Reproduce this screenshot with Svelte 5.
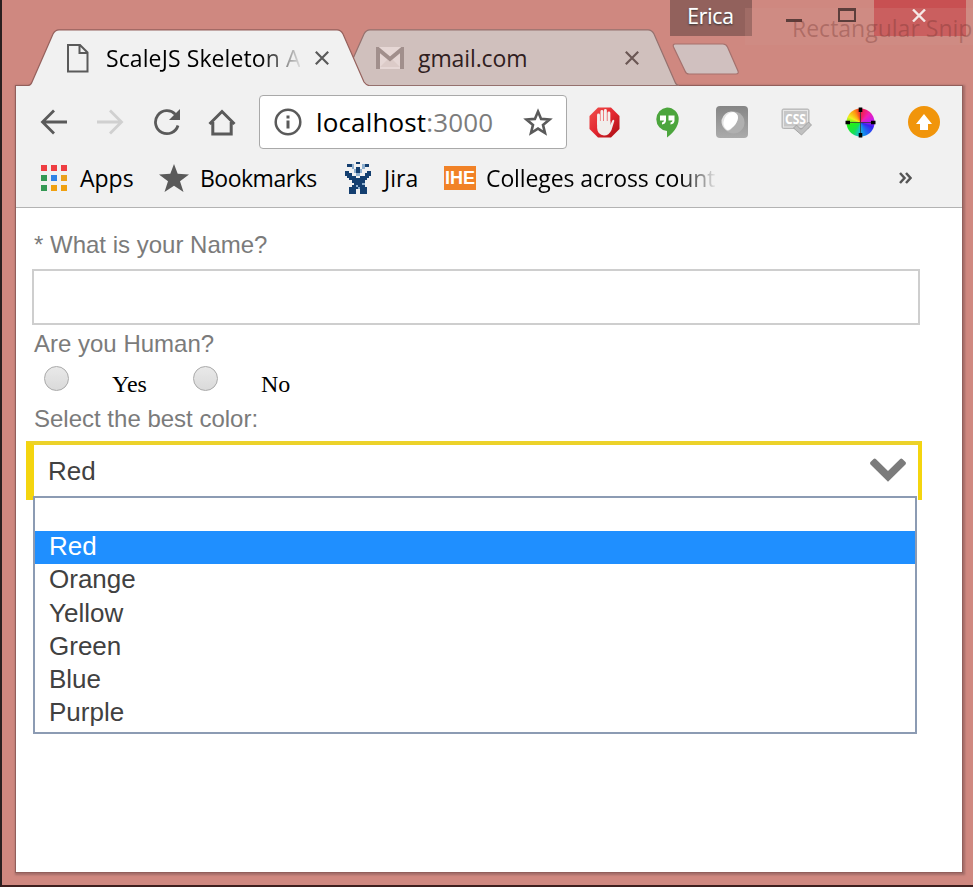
<script>
  const options = ['', 'Red', 'Orange', 'Yellow', 'Green', 'Blue', 'Purple'];
  let selected = $state('Red');
  const appColors = ['#ee3e42', '#ee3e42', '#ee3e42', '#349854', '#2f82e6', '#eaa01c', '#349854', '#f0a010', '#f0a010'];
  // Pixel map of the Jira mark: # is dark blue, o is light blue.
  const jira = [
    '.....##.....',
    '.##o....o##.',
    '...o.##.o...',
    '....o##o....',
    '##..o##o..##',
    '###..oo..###',
    '.####..####.',
    '..########..',
    '...######...',
    '....####o...',
    '...##o###...',
    '..####o###..',
    '..###..###..',
    '..###..###..'
  ];
  const cells = jira.flatMap((row, y) => [...row].map((c, x) => ({ c, x, y }))).filter((d) => d.c !== '.');
</script>

<div class="desktop">
  <header class="strip">
    <div class="tab active">
      <svg class="shape" width="342" height="58" viewBox="0 0 342 58"><path d="M0 57Q3 56 4 53L25 5Q27 1 31 1H309Q313 1 315 5L336 53Q338 56 341 57V58H0Z" fill="#f1f1f1" /><path d="M0 56.5Q3 56 4 53L25 5Q27 .8 31 .8H309Q313 .8 315 5L336 53Q338 56 341 56.5" fill="none" stroke="#95605c" stroke-width="1.2" /></svg>
      <svg class="doc" width="22" height="29" viewBox="0 0 22 29"><path d="M1 1H13L20.500 8.500V27.500H1Z M12.500 1V9H20.500" fill="none" stroke="#5a5a5a" stroke-width="2" /></svg>
      <span class="title fade">ScaleJS Skeleton A</span>
      <svg class="x" width="14" height="14" viewBox="0 0 14 14"><path d="M.8 .8L13.200 13.200M13.200 .8L.8 13.200" stroke="#5a5a5a" stroke-width="2.200" /></svg>
    </div>
    <div class="tab idle">
      <svg class="shape" width="338" height="58" viewBox="0 0 338 58"><path d="M0 57L23 5Q25 1 29 1H307Q311 1 313 5L334 53Q335 56 338 57Z" fill="#d0c0bd" /><path d="M0 56.500L23 5Q25 .8 29 .8H307Q311 .8 313 5L334 53Q335 56 338 56.500H0" fill="none" stroke="#95716e" stroke-width="1.200" /></svg>
      <svg class="mail" width="28" height="22" viewBox="0 0 28 22"><rect width="28" height="22" rx="2" fill="#e6d7d5" /><path d="M4 20L14 10L24 20" fill="#dccbc8" /><path d="M2 22V2L14 12L26 2V22" fill="none" stroke="#a18f8c" stroke-width="4" /></svg>
      <span class="title">gmail.com</span>
      <svg class="x" width="14" height="14" viewBox="0 0 14 14"><path d="M.8 .8L13.200 13.200M13.200 .8L.8 13.200" stroke="#6b5754" stroke-width="2.200" /></svg>
    </div>
    <svg class="newtab" width="68" height="33" viewBox="0 0 68 33"><path d="M3 1H51Q54 1 55.500 4L66 28Q67 31 64 31H17Q14 31 13 28L1.500 4Q.5 1 3 1Z" fill="#d0c0bf" stroke="#a5716d" stroke-width="1.200" /></svg>
  </header>

  <div class="caption">
    <span class="user">Erica</span>
    <svg class="min" width="16" height="3"><rect width="16" height="3" fill="#3c2624" /></svg>
    <svg class="max" width="18" height="14"><rect x="1" y="1.500" width="16" height="11.500" fill="none" stroke="#3c2624" stroke-width="2" /><path d="M0 1.500H18" stroke="#3c2624" stroke-width="3" /></svg>
    <span class="close"><svg width="14" height="13" viewBox="0 0 14 13"><path d="M1 .5L13 12.500M13 .5L1 12.500" stroke="#fff" stroke-width="2.400" /></svg></span>
  </div>
  <div class="ghost">Rectangular Snip</div>

  <main class="window">
    <div class="chrome">
      <div class="nav">
        <svg class="back" width="28" height="26" viewBox="0 0 28 26"><path d="M27 13H2M14 1.500L2.500 13L14 24.500" fill="none" stroke="#5a5a5a" stroke-width="2.800" /></svg>
        <svg class="fwd" width="28" height="26" viewBox="0 0 28 26"><path d="M1 13H26M14 1.500L25.500 13L14 24.500" fill="none" stroke="#d0d0d0" stroke-width="2.800" /></svg>
        <svg class="reload" width="28" height="28" viewBox="0 0 28 28"><path d="M25 17.500A11.500 11.500 0 1 1 22.300 6.200" fill="none" stroke="#5a5a5a" stroke-width="2.800" /><path d="M27 1V12H16Z" fill="#5a5a5a" /></svg>
        <svg class="home" width="28" height="27" viewBox="0 0 28 27"><path d="M1.500 15L14 2.500L26.500 15M4.800 13V25H23.200V13" fill="none" stroke="#5a5a5a" stroke-width="3" /></svg>
        <div class="address">
          <svg class="info" width="28" height="28" viewBox="0 0 28 28"><circle cx="14" cy="14" r="12.300" fill="none" stroke="#5a5a5a" stroke-width="2.500" /><path d="M12.500 7.500H15.500V10.500H12.500ZM12.500 12.500H15.500V20.500H12.500Z" fill="#5a5a5a" /></svg>
          <span class="url">localhost<i>:3000</i></span>
          <svg class="fav" width="30" height="28" viewBox="0 0 30 28"><path d="M15 3.500L18.100 10.900L26.500 11.500L20 16.900L22 25L15 20.600L8 25L10 16.900L3.500 11.500L11.900 10.900Z" fill="none" stroke="#5a5a5a" stroke-width="2.600" /></svg>
        </div>
        <svg class="stop" width="31" height="31" viewBox="0 0 31 31"><defs><linearGradient id="red" x2="1" y2="1"><stop stop-color="#f0504c" /><stop offset=".5" stop-color="#e32730" /><stop offset="1" stop-color="#a60d12" /></linearGradient></defs><path d="M9 .5H22L30.500 9V22L22 30.500H9L.5 22V9Z" fill="url(#red)" /><g stroke="#f4f0ed" stroke-width="2.900" stroke-linecap="round"><path d="M9.500 17V8M12.900 16V4.500M16.400 16V3.500M19.900 17V6" /></g><path d="M8.100 14H21.300V18L23.300 13.500Q25 12 25.300 14L22.500 23Q20 28.500 15 28.500Q8.500 28 8.100 21Z" fill="#f1eeec" /></svg>
        <svg class="quote" width="24" height="31" viewBox="0 0 24 31"><path d="M12 .5A11.700 11.700 0 0 1 23.700 12C23.700 20 17 27 12 30.500V24A11.800 11.800 0 0 1 12 .5Z" fill="#4ca53d" /><path d="M5 8.500H11V14Q10.500 17 7 17.500V15.500Q9 15 9 13.500H5ZM13.500 8.500H19.500V14Q19 17 15.500 17.500V15.500Q17.500 15 17.500 13.500H13.500Z" fill="#fff" /></svg>
        <svg class="egg" width="32" height="32" viewBox="0 0 32 32"><defs><linearGradient id="grey" x2="0" y2="1"><stop stop-color="#858585" /><stop offset="1" stop-color="#ababab" /></linearGradient></defs><rect width="32" height="32" rx="4" fill="url(#grey)" /><circle cx="17.500" cy="16.500" r="11" fill="#b0b0b0" /><path d="M5.500 14Q8 6 15 5.500Q22 6 22 12Q21 18 16 22Q13 26 10 24Q5 20 5.500 14Z" fill="#e2e2e2" /><path d="M7.500 16Q9 7 17 6Q22 7 22 12Q21 18 15 22.500Q12 25 10 23Q7 20 7.500 16Z" fill="#fff" /></svg>
        <svg class="css" width="31" height="29" viewBox="0 0 31 29"><rect x="1" y="1" width="27" height="19.500" rx="1.500" fill="#c7c7c7" stroke="#b5b5b5" /><rect x="2.500" y="2.500" width="24" height="16.500" fill="none" stroke="#e6e6e6" /><text x="4" y="15.500" textLength="21" lengthAdjust="spacingAndGlyphs">CSS</text><path d="M12.500 20L15.500 17L20 21.500L27.500 14L30.500 17L20.500 27Z" fill="#c0c0c0" stroke="#999" stroke-width=".8" /></svg>
        <div class="wheel"><svg width="31" height="31" viewBox="0 0 31 31"><path d="M15.500 5V26M5 15.500H26" stroke="#333" stroke-width=".8" /><path d="M15.500 .5V5M15.500 26V30.500M.5 15.500H5M26 15.500H30.500" stroke="#000" stroke-width="3.600" /></svg></div>
        <svg class="up" width="32" height="32" viewBox="0 0 32 32"><circle cx="16" cy="16" r="16" fill="#f1950b" /><path d="M16 8L24 18H20V24H12V18H8Z" fill="#fff" /></svg>
      </div>
      <div class="bookmarks">
        <span class="grid">{#each appColors as color}<b style:background={color}></b>{/each}</span>
        <span class="apps">Apps</span>
        <svg class="solid" width="30" height="28" viewBox="0 0 30 28"><path d="M15 0L18.700 9.800L30 10.400L21 17.200L24.500 28L15 21.800L5.500 28L9 17.200L0 10.400L11.300 9.800Z" fill="#5a5a5a" /></svg>
        <span class="books">Bookmarks</span>
        <svg class="jira" width="26" height="32" viewBox="0 0 12 14" preserveAspectRatio="none" shape-rendering="crispEdges">{#each cells as d}<rect x={d.x} y={d.y} width="1" height="1" fill={d.c === '#' ? '#143f70' : '#8fb0cf'} />{/each}</svg>
        <span class="jiraname">Jira</span>
        <span class="ihe">IHE</span>
        <span class="colleges">Colleges across count</span>
        <svg class="more" width="13" height="12" viewBox="0 0 13 12"><path d="M1 1L5.500 6L1 11M7 1L11.500 6L7 11" fill="none" stroke="#555" stroke-width="2.500" /></svg>
      </div>
    </div>

    <form class="form">
      <label for="name">* What is your Name?</label>
      <input id="name" type="text" />
      <p>Are you Human?</p>
      <div class="radios">
        <i class="dot"></i><span class="yes">Yes</span>
        <i class="dot"></i><span>No</span>
      </div>
      <p class="pick">Select the best color:</p>
      <div class="select">
        <span>{selected}</span>
        <svg width="36" height="24" viewBox="0 0 36 24"><path d="M5.800 0.900Q4.700 0 3.600 0.900L.5 4Q-.4 5.200 .5 6.400L18 23.800L35.500 6.400Q36.400 5.200 35.500 4L32.400 .9Q31.300 0 30.200 .9L18 13Z" fill="#7b7b7b" /></svg>
        <ul>
          {#each options as option}
            <li class:on={option === selected}>{option}</li>
          {/each}
        </ul>
      </div>
    </form>
  </main>
</div>

<style>
  :global(body) { margin: 0; }
  * { box-sizing: border-box; }
  svg { display: block; flex: none; }
  .desktop { position: relative; width: 973px; height: 887px; overflow: hidden; background: #cf8880; border-left: 2px solid #292020; border-bottom: 2px solid #3d1f1e; font-family: 'Open Sans', 'Noto Sans', sans-serif; }
  .strip { display: flex; height: 86px; padding: 29px 0 0 26px; }
  .tab { position: relative; display: flex; align-items: center; height: 58px; font-size: 23px; white-space: nowrap; }
  .tab > * { position: relative; }
  .tab > .shape { position: absolute; left: 0; top: 0; }
  .active { width: 342px; z-index: 2; padding-left: 39px; letter-spacing: .1px; color: #000; }
  .idle { width: 337px; margin-left: -29px; padding-left: 35px; color: #30201f; letter-spacing: -.1px; }
  .doc { margin-right: 17px; }
  .title { width: 194px; overflow: hidden; }
  .active .x { margin-left: 15px; }
  .idle .title { margin-left: 14px; width: 190px; }
  .idle .x { margin-left: 17px; }
  .fade { -webkit-mask-image: linear-gradient(90deg, #000 80%, transparent 102%); mask-image: linear-gradient(90deg, #000 80%, transparent 102%); }
  .newtab { margin: 14px 0 0 -6px; }
  .caption { position: absolute; top: 0; left: 668px; width: 303px; height: 36px; display: flex; align-items: flex-start; z-index: 3; }
  .user { width: 82px; height: 36px; padding-right: 1px; line-height: 33px; text-align: center; background: #92615c; color: #fff; font-size: 21px; letter-spacing: -.2px; text-shadow: 0 1px 2px #222, 0 0 1px #fff; }
  .min { margin: 19px 0 0 34px; }
  .max { margin: 8px 0 0 36px; }
  .close { display: flex; width: 92px; height: 36px; margin-left: 18px; padding: 9px 0 0 38px; background: #c85052; }
  .ghost { position: absolute; left: 743px; top: 8px; width: 228px; height: 37px; z-index: 4; padding-left: 47px; line-height: 41px; font-size: 23px; letter-spacing: 0; white-space: nowrap; overflow: hidden; color: rgba(112, 50, 46, .35); background: rgba(210, 150, 142, .22); }
  .window { width: 946px; height: 786px; margin-left: 14px; background: #fff; box-shadow: 0 0 0 1px #925f5b, 1px 1px 2px 2px #a36c67; }
  .chrome { height: 122px; background: #f1f1f1; border-bottom: 1px solid #b3b3b3; }
  .nav { display: flex; align-items: center; height: 72px; padding-left: 24px; }
  .fwd { margin-left: 28px; }
  .reload { margin-left: 29px; }
  .home { margin-left: 27px; }
  .address { display: flex; align-items: center; flex: none; width: 308px; height: 54px; margin-left: 23px; background: #fff; border: 1px solid #a9a9a9; border-radius: 4px; }
  .info { margin-left: 14px; }
  .url { width: 180px; margin-left: 14px; font-size: 26px; line-height: 36px; letter-spacing: .15px; white-space: nowrap; color: #000; }
  .url i { font-style: normal; color: #7c7c7c; }
  .fav { margin-left: 27px; }
  .stop { margin-left: 22px; }
  .quote { margin-left: 35px; }
  .egg { margin-left: 37px; }
  .css { margin-left: 33px; }
  .css text { font: bold 14px 'Open Sans', sans-serif; fill: #fff; }
  .wheel { flex: none; width: 31px; height: 31px; margin-left: 33px; border-radius: 50%; background: radial-gradient(circle, transparent 13.500px, #f1f1f1 14.500px), conic-gradient(#f02040, #f020b0 45deg, #c01cf0 85deg, #3a20f0 110deg, #1878f0 155deg, #18c0d8 185deg, #18e050 215deg, #20f018 260deg, #f0f020 295deg, #ff9a10 330deg, #f02030); }
  .up { margin-left: 32px; }
  .bookmarks { display: flex; align-items: center; height: 39px; padding-left: 25px; font-size: 23px; letter-spacing: -.5px; line-height: 32px; color: #000; white-space: nowrap; }
  .bookmarks span { flex: none; }
  .grid { display: grid; grid-template-columns: repeat(3, 6px); gap: 4px; }
  .grid b { width: 6px; height: 6px; }
  .apps { width: 54px; margin-left: 13px; letter-spacing: 0; }
  .solid { margin-left: 25px; }
  .books { width: 117px; margin-left: 11px; }
  .jira { margin-left: 28px; }
  .jiraname { width: 36px; margin-left: 13px; letter-spacing: 0; }
  .ihe { width: 32px; height: 24px; margin-left: 24px; background: #f18227; color: #fff; font: bold 19px/24px 'Liberation Sans', sans-serif; text-align: center; letter-spacing: 0; font-size: 18px; }
  .colleges { width: 231px; margin-left: 10px; letter-spacing: -.1px; -webkit-mask-image: linear-gradient(90deg, #000 84%, transparent); mask-image: linear-gradient(90deg, #000 84%, transparent); }
  .more { margin-left: 182px; }
  .form { padding: 22px 0 0 16px; font: 24px/30px 'Liberation Sans', Arial, sans-serif; color: #7b7b7b; }
  label { display: block; padding-left: 2px; }
  input { display: block; width: 888px; height: 56px; margin: 9px 0 4px; border: 2px solid #cecece; background: #fff; outline: none; }
  p { margin: 0; padding-left: 2px; }
  .radios { display: flex; height: 45px; padding: 7px 0 0 12px; font-family: 'Liberation Serif', 'Times New Roman', serif; color: #000; }
  .radios span { margin-left: 43px; padding-top: 3px; }
  .yes { width: 37px; margin-right: 43px; }
  .dot { width: 25px; height: 25px; border: 1px solid #a9a9a9; border-radius: 50%; background: linear-gradient(#e9e9e9, #dadada); }
  .yes + .dot { margin-left: 1px; }
  .select { position: relative; display: flex; justify-content: space-between; width: 896px; height: 59px; margin: 7px 0 0 -6px; padding: 11px 12px 0 14px; border: 4px solid #ecd22a; border-left: 8px solid #f4d50f; border-right-color: #f4d50f; border-bottom: 0; font-size: 26px; color: #414141; }
  .select > svg { margin-top: 2px; }
  .select ul { position: absolute; left: -1px; top: 51px; width: 884px; height: 238px; margin: 0; padding: 0; list-style: none; background: #fff; border: 2px solid #8c9bb3; }
  .select li { height: 33.200px; line-height: 30px; padding-left: 14px; }
  .select li.on { background: #1f8fff; color: #fff; }
</style>
